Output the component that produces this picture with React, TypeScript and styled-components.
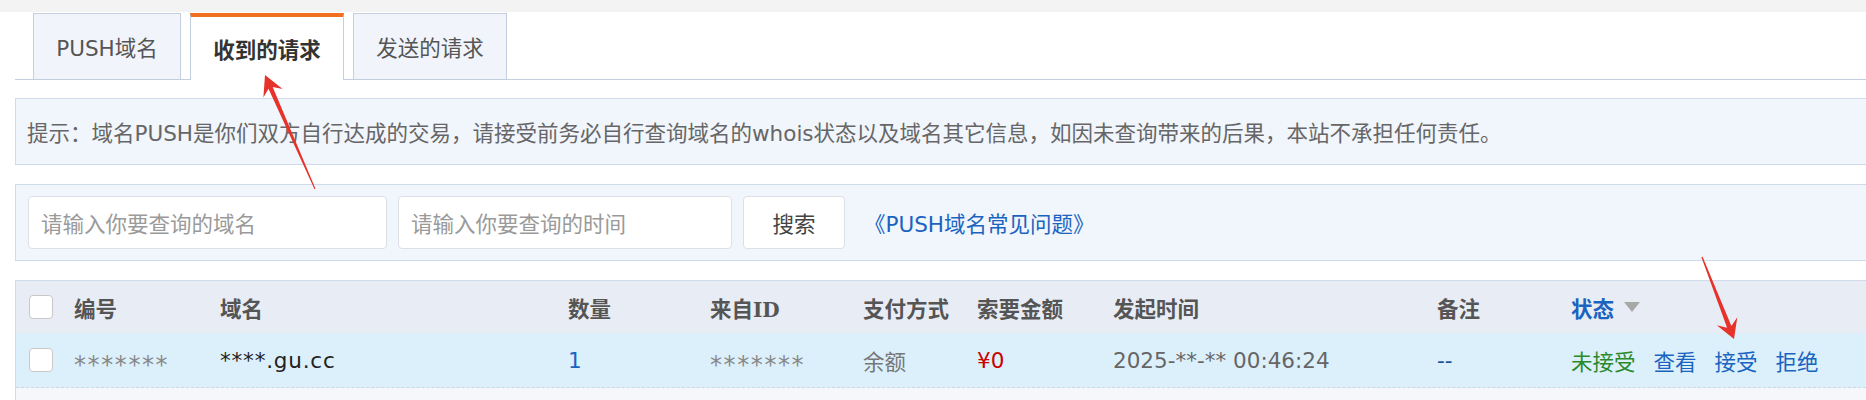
import React from "react";
import styled, { createGlobalStyle } from "styled-components";

const GlobalStyle = createGlobalStyle`
  html, body { margin: 0; padding: 0; background: #ffffff; overflow: hidden; }
  body {
    font-family: "DejaVu Sans", "Noto Sans CJK SC", sans-serif;
    font-size: 21.5px;
    color: #555;
  }
  * { box-sizing: border-box; }
`;

const Page = styled.div`
  position: relative;
  width: 1866px;
  height: 400px;
  overflow: hidden;
`;

const TopBand = styled.div`
  height: 12px;
  background: #f3f3f3;
`;

const Content = styled.div`
  display: flex;
  flex-direction: column;
  padding: 1px 0 0 15px;
  margin-right: -30px;
`;

const TabBar = styled.div`
  display: flex;
  align-items: flex-end;
  gap: 9px;
  height: 67px;
  padding-left: 18px;
  border-bottom: 1px solid #c3cfdf;
`;

const Tab = styled.div<{ $active?: boolean; $w: number }>`
  display: flex;
  align-items: center;
  justify-content: center;
  width: ${(p) => p.$w}px;
  height: ${(p) => (p.$active ? "67px" : "66px")};
  margin-bottom: ${(p) => (p.$active ? "-1px" : "0")};
  background: ${(p) => (p.$active ? "#ffffff" : "#f1f4fb")};
  border: 1px solid #c3cfdf;
  border-bottom: none;
  border-top: ${(p) => (p.$active ? "4px solid #f07020" : "1px solid #c3cfdf")};
  color: ${(p) => (p.$active ? "#333" : "#555")};
  font-weight: ${(p) => (p.$active ? 700 : 400)};
  white-space: nowrap;
`;

const Panel = styled.div`
  margin-top: 18px;
  background: #f1f5fc;
  border: 1px solid #cfdbeb;
`;

const Notice = styled(Panel)`
  display: flex;
  align-items: center;
  height: 67px;
  padding-left: 11px;
  color: #666;
  white-space: nowrap;
`;

const SearchBar = styled(Panel)`
  margin-top: 19px;
  display: flex;
  align-items: center;
  gap: 11px;
  height: 77px;
  padding: 0 12px;
`;

const Input = styled.div<{ $w: number }>`
  display: flex;
  align-items: center;
  width: ${(p) => p.$w}px;
  height: 53px;
  padding-left: 12px;
  background: #fff;
  border: 1px solid #dcdfe6;
  border-radius: 4px;
  color: #9a9a9a;
  white-space: nowrap;
`;

const Button = styled.div`
  display: flex;
  align-items: center;
  justify-content: center;
  width: 102px;
  height: 53px;
  background: #fff;
  border: 1px solid #dcdfe6;
  border-radius: 4px;
  color: #444;
`;

const HelpLink = styled.a`
  margin-left: 8px;
  color: #1a64c0;
  text-decoration: none;
  white-space: nowrap;
`;

const Table = styled.div`
  margin-top: 19px;
  border-top: 1px solid #cfdbeb;
  border-left: 1px solid #cfdbeb;
  background: #f5f7fa;
  height: 200px;
`;

const COLS = "58px 146px 348px 142px 153px 114px 136px 324px 134px 1fr";

const HeadRow = styled.div`
  display: grid;
  grid-template-columns: ${COLS};
  align-items: center;
  height: 52px;
  background: #e8ecf4;
  color: #555;
  font-weight: 700;
`;

const BodyRow = styled.div`
  display: grid;
  grid-template-columns: ${COLS};
  align-items: center;
  height: 55px;
  background: #dcf0fc;
  border-bottom: 1px dashed #cdd6e2;
`;

const CheckCell = styled.div`
  display: flex;
  align-items: center;
  padding-left: 13px;
`;

const Checkbox = styled.span`
  display: inline-block;
  width: 24px;
  height: 24px;
  background: #fff;
  border: 1px solid #c8c8c8;
  border-radius: 4px;
`;

const Cell = styled.div<{ $color?: string }>`
  color: ${(p) => p.$color || "inherit"};
  white-space: nowrap;
`;

const SortCell = styled.div`
  display: flex;
  align-items: center;
  white-space: nowrap;
`;

const MaskedCell = styled.div`
  color: #888;
  white-space: nowrap;
  font-size: 24px;
  letter-spacing: 1.6px;
  line-height: 1;
  padding-top: 10px;
`;

const DomainCell = styled.div`
  color: #222;
  white-space: nowrap;
  letter-spacing: 0.8px;
`;

const SerifLatin = styled.span`
  font-family: "DejaVu Serif", "Liberation Serif", serif;
  font-weight: 700;
  font-size: 20px;
`;

const SortHead = styled.span`
  color: #1a64c0;
`;

const SortTriangle = styled.span`
  display: inline-block;
  margin-left: 10px;
  width: 0;
  height: 0;
  border-left: 8px solid transparent;
  border-right: 8px solid transparent;
  border-top: 10px solid #a8a8a8;
`;

const Actions = styled.div`
  display: flex;
  gap: 18px;
  white-space: nowrap;
`;

const Action = styled.a<{ $color: string }>`
  color: ${(p) => p.$color};
  text-decoration: none;
`;

const Overlay = styled.svg`
  position: absolute;
  left: 0;
  top: 0;
  width: 1866px;
  height: 400px;
  pointer-events: none;
`;

type Pt = [number, number];

function arrowPoints(
  tail: Pt,
  tip: Pt,
  headLen = 20,
  headHalf = 10.5,
  notch = 14,
  tailW = 0.6,
  neckW = 2.3
): string {
  const [tx, ty] = tail;
  const dx = tip[0] - tx;
  const dy = tip[1] - ty;
  const L = Math.hypot(dx, dy);
  const ux = dx / L;
  const uy = dy / L;
  const nx = -uy;
  const ny = ux;
  const p = (d: number, w: number) =>
    `${(tx + ux * d + nx * w).toFixed(1)},${(ty + uy * d + ny * w).toFixed(1)}`;
  return [
    p(0, tailW),
    p(L - notch, neckW),
    p(L - headLen, headHalf),
    p(L, 0),
    p(L - headLen, -headHalf),
    p(L - notch, -neckW),
    p(0, -tailW),
  ].join(" ");
}

const headers = ["编号", "域名", "数量", null, "支付方式", "索要金额", "发起时间", "备注"];

export default function App() {
  return (
    <Page>
      <GlobalStyle />
      <TopBand />
      <Content>
        <TabBar>
          <Tab $w={148}>PUSH域名</Tab>
          <Tab $w={154} $active>收到的请求</Tab>
          <Tab $w={154}>发送的请求</Tab>
        </TabBar>

        <Notice>
          提示：域名PUSH是你们双方自行达成的交易，请接受前务必自行查询域名的whois状态以及域名其它信息，如因未查询带来的后果，本站不承担任何责任。
        </Notice>

        <SearchBar>
          <Input $w={359}>请输入你要查询的域名</Input>
          <Input $w={334}>请输入你要查询的时间</Input>
          <Button>搜索</Button>
          <HelpLink href="#">《PUSH域名常见问题》</HelpLink>
        </SearchBar>

        <Table>
          <HeadRow>
            <CheckCell>
              <Checkbox />
            </CheckCell>
            {headers.map((h, i) =>
              h === null ? (
                <Cell key={i}>
                  来自<SerifLatin>ID</SerifLatin>
                </Cell>
              ) : (
                <Cell key={i}>{h}</Cell>
              )
            )}
            <SortCell>
              <SortHead>状态</SortHead>
              <SortTriangle />
            </SortCell>
          </HeadRow>
          <BodyRow>
            <CheckCell>
              <Checkbox />
            </CheckCell>
            <MaskedCell>*******</MaskedCell>
            <DomainCell>****.gu.cc</DomainCell>
            <Cell $color="#1a64c0">1</Cell>
            <MaskedCell>*******</MaskedCell>
            <Cell $color="#777">余额</Cell>
            <Cell $color="#cc0000">¥0</Cell>
            <Cell $color="#666">2025-**-** 00:46:24</Cell>
            <Cell $color="#1a4f9c">--</Cell>
            <Actions>
              <Action $color="#2a8a2a">未接受</Action>
              <Action $color="#1a64c0" href="#">查看</Action>
              <Action $color="#1a64c0" href="#">接受</Action>
              <Action $color="#1a64c0" href="#">拒绝</Action>
            </Actions>
          </BodyRow>
        </Table>
      </Content>

      <Overlay viewBox="0 0 1866 400">
        <polygon points={arrowPoints([315, 189], [265, 75], 20, 10.5, 14)} fill="#e6322b" />
        <polygon points={arrowPoints([1702, 257], [1734, 339], 19, 11, 13)} fill="#e6322b" />
      </Overlay>
    </Page>
  );
}
